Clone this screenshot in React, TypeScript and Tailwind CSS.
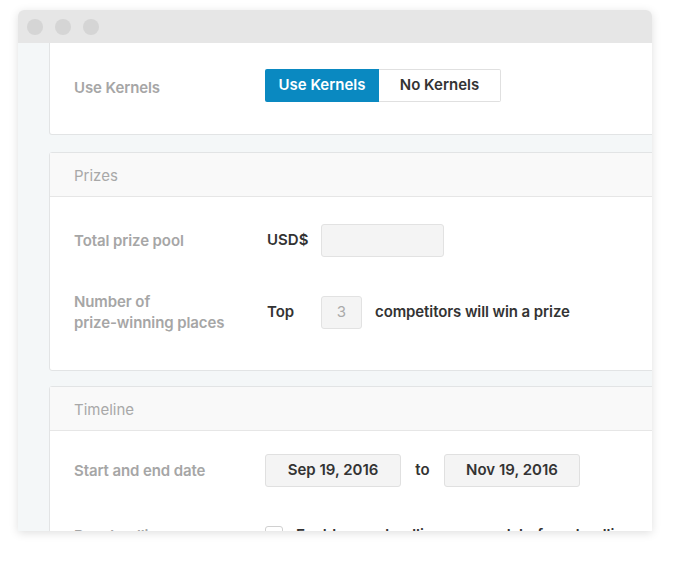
import React from "react";

const font = { fontFamily: "Inter, 'Liberation Sans', Arial, sans-serif" };

function Row(props: { label: React.ReactNode; children: React.ReactNode; className?: string }) {
  return (
    <div className={`flex items-center ${props.className || ""}`}>
      <div className="w-[191px] shrink-0 text-[15px] font-semibold leading-[21px] tracking-[-0.1px] text-[#a6a6a6]">{props.label}</div>
      <div className="flex items-center">{props.children}</div>
    </div>
  );
}

function Card(props: { title: string; children: React.ReactNode; className?: string }) {
  return (
    <div className={`w-[640px] rounded-[3px] border border-[#e2e4e5] bg-white ${props.className || ""}`}>
      <div className="flex h-[44px] items-center border-b border-[#e6e6e6] bg-[#f9f9f9] pl-[24px] pt-[3px] text-[15px] text-[#a8a8a8]">
        {props.title}
      </div>
      {props.children}
    </div>
  );
}

export default function App() {
  return (
    <div className="h-[576px] w-[679px] bg-white" style={font}>
      <div className="ml-[18px] pt-[10px]">
        <div className="h-[521px] w-[634px] overflow-hidden rounded-t-[6px] shadow-[0_2px_10px_rgba(0,0,0,0.13)]">
          {/* title bar */}
          <div className="flex h-[33px] items-center gap-[12px] bg-[#e6e6e6] pl-[9px]">
            <span className="h-[16px] w-[16px] rounded-full bg-[#d5d5d5]" />
            <span className="h-[16px] w-[16px] rounded-full bg-[#d5d5d5]" />
            <span className="h-[16px] w-[16px] rounded-full bg-[#d5d5d5]" />
          </div>

          <div className="h-[488px] bg-[#f4f7f8] pl-[31px]">
            {/* kernels card, top cut off */}
            <div className="w-[640px] rounded-b-[3px] border border-t-0 border-[#e2e4e5] bg-white pb-[32px] pl-[24px] pt-[26px]">
              <Row label={<span className="relative top-[2px]">Use Kernels</span>}>
                <div className="flex h-[33px] text-[15px] font-semibold">
                  <button className="w-[114px] rounded-l-[2px] bg-[#0a89c1] text-white">Use Kernels</button>
                  <button className="w-[122px] rounded-r-[2px] border border-l-0 border-[#e0e0e0] bg-white text-[#333]">No Kernels</button>
                </div>
              </Row>
            </div>

            <Card title="Prizes" className="mt-[17px]">
              <div className="pb-[37px] pl-[24px] pt-[27px]">
                <Row label="Total prize pool">
                  <span className="ml-[2px] w-[54px] text-[15px] font-semibold text-[#333]">USD$</span>
                  <div className="h-[33px] w-[123px] rounded-[3px] border border-[#e2e2e2] bg-[#f4f4f4]" />
                </Row>
                <Row label={<>Number of<br />prize-winning places</>} className="mt-[34px]">
                  <span className="ml-[2px] w-[54px] text-[15px] font-semibold text-[#333]">Top</span>
                  <div className="flex h-[33px] w-[41px] items-center justify-center rounded-[3px] border border-[#e2e2e2] bg-[#f4f4f4] text-[15px] text-[#aaa]">
                    3
                  </div>
                  <span className="ml-[13px] text-[15px] font-semibold tracking-[-0.1px] text-[#333]">competitors will win a prize</span>
                </Row>
              </div>
            </Card>

            <Card title="Timeline" className="mt-[15px]">
              <div className="pl-[24px] pt-[23px]">
                <Row label="Start and end date">
                  <div className="flex h-[33px] w-[136px] items-center justify-center rounded-[3px] border border-[#e0e0e0] bg-[#f4f4f4] text-[15px] font-semibold text-[#333]">
                    Sep 19, 2016
                  </div>
                  <span className="w-[43px] text-center text-[15px] font-semibold text-[#333]">to</span>
                  <div className="flex h-[33px] w-[136px] items-center justify-center rounded-[3px] border border-[#e0e0e0] bg-[#f4f4f4] text-[15px] font-semibold text-[#333]">
                    Nov 19, 2016
                  </div>
                </Row>
                <Row label="Pre-deadline" className="mt-[37px]">
                  <div className="h-[18px] w-[18px] rounded-[3px] border border-[#d0d0d0] bg-white" />
                  <span className="ml-[13px] text-[15px] font-semibold text-[#333]">Enable pre-deadline one week before deadline</span>
                </Row>
              </div>
            </Card>
          </div>
        </div>
      </div>
    </div>
  );
}
